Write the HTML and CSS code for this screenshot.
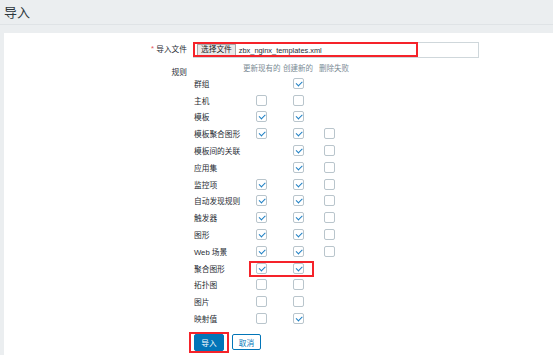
FILE: index.html
```html
<!DOCTYPE html>
<html lang="zh">
<head>
<meta charset="utf-8">
<title>导入</title>
<link rel="stylesheet" href="styles.css">
</head>
<body>
<header class="page-head"><h1 class="title">导入</h1></header>
<main class="panel">
  <div class="form">
    <div class="label"><span class="req">*</span> 导入文件</div>
    <div class="file-input">
      <span class="file-chosen mark-box">
        <span class="file-btn">选择文件</span>
        <span class="file-name">zbx_nginx_templates.xml</span>
      </span>
    </div>

    <div class="label label-rules">规则</div>
    <div class="rules">
      <span></span><span class="hd">更新现有的</span><span class="hd">创建新的</span><span class="hd">删除失败</span>

      <span class="rl">群组</span><span></span><span class="cb c2 on"></span><span></span>
      <span class="rl">主机</span><span class="cb c1"></span><span class="cb c2"></span><span></span>
      <span class="rl">模板</span><span class="cb c1 on"></span><span class="cb c2 on"></span><span></span>
      <span class="rl">模板聚合图形</span><span class="cb c1 on"></span><span class="cb c2 on"></span><span class="cb c3"></span>
      <span class="rl">模板间的关联</span><span></span><span class="cb c2 on"></span><span class="cb c3"></span>
      <span class="rl">应用集</span><span></span><span class="cb c2 on"></span><span class="cb c3"></span>
      <span class="rl">监控项</span><span class="cb c1 on"></span><span class="cb c2 on"></span><span class="cb c3"></span>
      <span class="rl">自动发现规则</span><span class="cb c1 on"></span><span class="cb c2 on"></span><span class="cb c3"></span>
      <span class="rl">触发器</span><span class="cb c1 on"></span><span class="cb c2 on"></span><span class="cb c3"></span>
      <span class="rl">图形</span><span class="cb c1 on"></span><span class="cb c2 on"></span><span class="cb c3"></span>
      <span class="rl">Web 场景</span><span class="cb c1 on"></span><span class="cb c2 on"></span><span class="cb c3"></span>
      <span class="rl">聚合图形</span><span class="cb c1 on"></span><span class="cb c2 on"></span><span></span>
      <span class="rl">拓扑图</span><span class="cb c1"></span><span class="cb c2"></span><span></span>
      <span class="rl">图片</span><span class="cb c1"></span><span class="cb c2"></span><span></span>
      <span class="rl">映射值</span><span class="cb c1"></span><span class="cb c2 on"></span><span></span>

      <span class="hl-screens"></span>
    </div>

    <div class="buttons">
      <span class="mark-btn"><button class="btn btn-primary" type="button">导入</button></span>
      <button class="btn btn-alt" type="button">取消</button>
    </div>
  </div>
</main>
</body>
</html>
```

FILE: styles.css
```css
* { box-sizing: border-box; }

html, body {
  height: 100%;
}

body {
  margin: 0;
  background: #ebeef0;
  font-family: "Liberation Sans", "Noto Sans CJK SC", sans-serif;
  color: #1f2c33;
  display: flex;
  flex-direction: column;
}

.page-head {
  height: 25px;
  border-bottom: 1px solid #dfe3e6;
  padding-left: 4px;
}

.title {
  margin: 0;
  font-size: 13px;
  font-weight: normal;
  line-height: 26px;
  color: #2e383e;
}

.panel {
  flex: 1;
  margin: 8px 0 0 4px;
  background: #ffffff;
  padding-top: 9px;
}

.form {
  display: grid;
  grid-template-columns: 183px 1fr;
  column-gap: 6px;
  font-size: 7.7px;
}

.label {
  text-align: right;
  line-height: 16px;
  color: #1f2c33;
}

.req {
  color: #e45959;
  position: relative;
  top: -1px;
}

.file-input {
  width: 286px;
  height: 16px;
  border: 1px solid #cfd7db;
  display: flex;
  align-items: center;
}

.file-chosen {
  position: relative;
  display: flex;
  align-items: center;
  width: 224px;
  height: 100%;
  padding-left: 3px;
}

.mark-box::after {
  content: "";
  position: absolute;
  left: -1px;
  top: -1px;
  right: 0;
  bottom: 0;
  border: 2px solid #f5232a;
}

.file-btn {
  height: 12px;
  line-height: 10px;
  padding: 0 3px;
  background: #e9e9e9;
  border: 1px solid #a9a9a9;
  color: #222;
}

.file-name {
  margin-left: 3px;
  font-size: 7.4px;
  color: #1f2c33;
}

.label-rules {
  margin-top: 5px;
  padding-top: 4px;
  line-height: 12px;
}

.rules {
  position: relative;
  margin-top: 5px;
  display: grid;
  grid-template-columns: 49px 40px 36px 34px;
  grid-template-rows: 12px;
  grid-auto-rows: 16.8px;
  align-items: center;
  width: 159px;
}

.hd {
  color: #7a8b94;
  padding-left: 1px;
  white-space: nowrap;
  font-size: 7.5px;
  line-height: 12px;
}

.rl {
  padding-left: 1px;
  white-space: nowrap;
  color: #1f2c33;
}

.cb {
  position: relative;
  width: 11px;
  height: 11px;
  border: 1px solid #b9c5cc;
  border-radius: 2px;
  background: #fff;
}

.c1 { margin-left: 14px; }
.c2 { margin-left: 11px; }
.c3 { margin-left: 6px; }

.cb.on::after {
  content: "";
  position: absolute;
  left: 2px;
  top: 2px;
  width: 5px;
  height: 2.5px;
  border-left: 1.6px solid #1d7fc4;
  border-bottom: 1.6px solid #1d7fc4;
  transform: rotate(-45deg);
}

.hl-screens {
  position: absolute;
  grid-row: 13 / 14;
  grid-column: 2 / 4;
  left: 7px;
  right: 4px;
  top: 1px;
  bottom: 0;
  border: 2px solid #f5232a;
}

.buttons {
  grid-column: 2;
  margin-top: 7px;
  padding-left: 1px;
  display: flex;
  align-items: center;
  gap: 8px;
}

.mark-btn {
  position: relative;
  display: inline-flex;
}

.mark-btn::after {
  content: "";
  position: absolute;
  left: -5px;
  right: -5px;
  top: -2px;
  bottom: -2px;
  border: 2px solid #f5232a;
}

.btn {
  font-family: "Liberation Sans", "Noto Sans CJK SC", sans-serif;
  font-size: 7.7px;
  height: 17px;
  padding: 0;
  border-radius: 2px;
  cursor: pointer;
}

.btn-primary {
  width: 30px;
  background: #0275b8;
  border: 1px solid #0275b8;
  color: #ffffff;
}

.btn-alt {
  width: 29px;
  height: 16px;
  background: #ffffff;
  border: 1px solid #0275b8;
  color: #0275b8;
}
```
